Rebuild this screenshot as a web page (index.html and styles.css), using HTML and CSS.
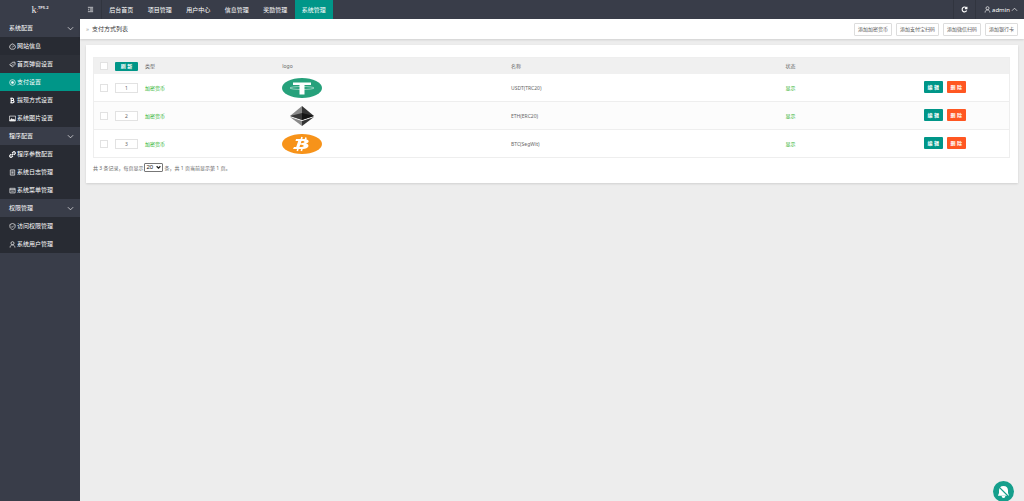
FILE: index.html
```
<!DOCTYPE html>
<html lang="zh-CN">
<head>
  <meta charset="UTF-8">
  <meta name="viewport" content="width=device-width, initial-scale=1.0">
  <title>支付方式列表</title>
  <link rel="stylesheet" href="styles.css">
</head>
<body>
  <svg class="defs" aria-hidden="true">
    <symbol id="i-down" viewBox="0 0 16 16"><path d="M2 5l6 6 6-6"/></symbol>
    <symbol id="i-up" viewBox="0 0 16 16"><path d="M2 11l6-6 6 6"/></symbol>
    <symbol id="i-gauge" viewBox="0 0 16 16"><path d="M4 14h8a6.500 6.500 0 1 0-8 0zM8 10l3-4M4 9h1M8 4v1"/></symbol>
    <symbol id="i-tag" viewBox="0 0 16 16"><path d="M1.500 9l6-6 6-.5.5 5-6 6zM5 9l3 3M7 6l3 3M11 5h1"/></symbol>
    <symbol id="i-radio" viewBox="0 0 16 16"><circle cx="8" cy="8" r="6.500"/><circle cx="8" cy="8" r="2.500" fill="currentColor"/></symbol>
    <symbol id="i-coin" viewBox="0 0 16 16"><path d="M5 3v10h4a2.500 2.500 0 0 0 0-5H5h3a2.500 2.500 0 0 0 0-5H3M3 13h3M7 1v2M7 13v2" stroke-width="2.500"/></symbol>
    <symbol id="i-image" viewBox="0 0 16 16"><path d="M1 2.500h14v11H1z"/><path d="M2 13l4-5 3 3 2-2 3 4z" fill="currentColor"/></symbol>
    <symbol id="i-link" viewBox="0 0 16 16"><path d="M7 5l2.500-2.500a2.800 2.800 0 0 1 4 4L11 9M9 11l-2.500 2.500a2.800 2.800 0 0 1-4-4L5 7M6 10l4-4" stroke-width="2.500"/></symbol>
    <symbol id="i-log" viewBox="0 0 16 16"><path d="M3 2h10v12H3zM5.500 5h5M5.500 8h5M5.500 11h5"/></symbol>
    <symbol id="i-window" viewBox="0 0 16 16"><path d="M2 3h12v10.500H2zM2 6h12M5 9.500h6"/></symbol>
    <symbol id="i-shield" viewBox="0 0 16 16"><path d="M8 1l6 2.500V8c0 3-2.500 5.500-6 7-3.500-1.500-6-4-6-7V3.500zM5 8l2 2 4-4"/></symbol>
    <symbol id="i-user" viewBox="0 0 16 16"><circle cx="8" cy="5" r="3.500"/><path d="M2.500 15c0-3.500 2-6 5.500-6s5.500 2.500 5.500 6"/></symbol>
    <symbol id="i-fold" viewBox="0 0 16 16"><path d="M2 3h12M7 6.500h7M7 9.500h7M2 13h12M4 6v4"/></symbol>
    <symbol id="i-refresh" viewBox="0 0 16 16"><path d="M13 10.500A5.500 5.500 0 1 1 12 4M13.500 1.500V6H9" stroke-width="2.500"/></symbol>
  </svg>

  <aside class="side">
    <a class="logo" href="#"><b>k</b><i>:</i><sup>TP5.2</sup></a>
    <nav class="side-menu">
      <button class="group" type="button">系统配置<svg class="icon"><use href="#i-down"/></svg></button>
      <a href="#"><svg class="icon"><use href="#i-gauge"/></svg>网站信息</a>
      <a class="hover" href="#"><svg class="icon"><use href="#i-tag"/></svg>首页弹窗设置</a>
      <a class="active" href="#"><svg class="icon"><use href="#i-radio"/></svg>支付设置</a>
      <a href="#"><svg class="icon"><use href="#i-coin"/></svg>提现方式设置</a>
      <a href="#"><svg class="icon"><use href="#i-image"/></svg>系统图片设置</a>
      <button class="group" type="button">程序配置<svg class="icon"><use href="#i-down"/></svg></button>
      <a href="#"><svg class="icon"><use href="#i-link"/></svg>程序参数配置</a>
      <a href="#"><svg class="icon"><use href="#i-log"/></svg>系统日志管理</a>
      <a href="#"><svg class="icon"><use href="#i-window"/></svg>系统菜单管理</a>
      <button class="group" type="button">权限管理<svg class="icon"><use href="#i-down"/></svg></button>
      <a href="#"><svg class="icon"><use href="#i-shield"/></svg>访问权限管理</a>
      <a href="#"><svg class="icon"><use href="#i-user"/></svg>系统用户管理</a>
    </nav>
  </aside>

  <div class="main">
    <header class="topbar">
      <button class="fold" type="button" aria-label="菜单"><svg class="icon"><use href="#i-fold"/></svg></button>
      <nav class="top-menu">
        <a href="#">后台首页</a>
        <a href="#">项目管理</a>
        <a href="#">用户中心</a>
        <a href="#">信息管理</a>
        <a href="#">奖励管理</a>
        <a class="active" href="#">系统管理</a>
      </nav>
      <button class="reload" type="button" aria-label="刷新"><svg class="icon"><use href="#i-refresh"/></svg></button>
      <a class="account" href="#"><svg class="icon"><use href="#i-user"/></svg>admin<svg class="icon"><use href="#i-up"/></svg></a>
    </header>

    <div class="page-head">
      <h1><span>»</span>支付方式列表</h1>
      <div class="tools">
        <button type="button">添加加密货币</button>
        <button type="button">添加支付宝扫码</button>
        <button type="button">添加微信扫码</button>
        <button type="button">添加银行卡</button>
      </div>
    </div>

    <main class="card">
      <table class="list">
        <thead>
          <tr>
            <th class="col-check"><input type="checkbox" aria-label="全选"></th>
            <th class="col-sort"><button class="btn sort-btn" type="button">刷 新</button></th>
            <th class="col-type">类型</th>
            <th class="col-logo">logo</th>
            <th class="col-name">名称</th>
            <th class="col-state">状态</th>
            <th></th>
          </tr>
        </thead>
        <tbody>
          <tr>
            <td><input type="checkbox" aria-label="选择 USDT"></td>
            <td><input class="sort" type="text" value="1" aria-label="排序"></td>
            <td class="green">加密货币</td>
            <td>
              <svg class="coin" viewBox="0 0 40 20">
                <ellipse cx="20" cy="10" rx="20" ry="10" fill="#26a17b"/>
                <path d="M11 4.500h18v2.500h-6.500v9.500h-5V7H11z" fill="#fff"/>
                <ellipse cx="20" cy="10" rx="12" ry="1.500" fill="none" stroke="#fff" stroke-width=".5"/>
              </svg>
            </td>
            <td>USDT(TRC20)</td>
            <td class="green">显示</td>
            <td><div class="acts"><button class="btn" type="button">编 辑</button><button class="btn danger" type="button">删 除</button></div></td>
          </tr>
          <tr>
            <td><input type="checkbox" aria-label="选择 ETH"></td>
            <td><input class="sort" type="text" value="2" aria-label="排序"></td>
            <td class="green">加密货币</td>
            <td>
              <svg class="coin" viewBox="0 0 40 20">
                <path d="M20 0L8 10l12 4z" fill="#8a8a8a"/>
                <path d="M20 0l12 10-12 4z" fill="#343434"/>
                <path d="M20 7L8 10l12 4z" fill="#393939"/>
                <path d="M20 7l12 3-12 4z" fill="#141414"/>
                <path d="M8 11l12 4v5z" fill="#8a8a8a"/>
                <path d="M32 11l-12 4v5z" fill="#343434"/>
              </svg>
            </td>
            <td>ETH(ERC20)</td>
            <td class="green">显示</td>
            <td><div class="acts"><button class="btn" type="button">编 辑</button><button class="btn danger" type="button">删 除</button></div></td>
          </tr>
          <tr>
            <td><input type="checkbox" aria-label="选择 BTC"></td>
            <td><input class="sort" type="text" value="3" aria-label="排序"></td>
            <td class="green">加密货币</td>
            <td>
              <svg class="coin" viewBox="0 0 40 20">
                <ellipse cx="20" cy="10" rx="20" ry="10" fill="#f7931a"/>
                <path d="M14 5h8.500c5 .2 5.500 3.500 1.500 4.600 4.500 1.200 2.500 5.400-3 5.400H11l1-2h2.200l2-6h-2.700zM19.500 7l-.7 2.200c4 .2 5.500-2.200.7-2.200zM18.200 10.700l-.7 2.400c5 .2 6-2.400.7-2.400z" fill="#fff" fill-rule="evenodd"/>
                <path d="M20 3l-.7 2.500M24 3.500L23.300 6M16 14.500l-.7 2.500M20 14.500l-.7 2.500" stroke="#fff" stroke-width="1.600"/>
              </svg>
            </td>
            <td>BTC(SegWit)</td>
            <td class="green">显示</td>
            <td><div class="acts"><button class="btn" type="button">编 辑</button><button class="btn danger" type="button">删 除</button></div></td>
          </tr>
        </tbody>
      </table>

      <div class="pager">
        <label for="limit">共 3 条记录，每页显示</label>
        <select id="limit"><option>20</option><option>40</option><option>60</option></select>
        <span>条，共 1 页当前显示第 1 页。</span>
      </div>
    </main>
  </div>

  <button class="notice" type="button" aria-label="通知">
    <svg viewBox="0 0 20 20">
      <path d="M10 2.500c-4 0-6 2.500-6 6V12l-1.500 3.500h15L16 12V8.500c0-3.500-2-6-6-6zM7.500 16h5a2.500 2.500 0 0 1-5 0z" fill="#fff"/>
      <path d="M3 3l14 14" stroke="#159f8c" stroke-width="1.500"/>
    </svg>
  </button>
</body>
</html>
```

FILE: styles.css
```
* {
  box-sizing: border-box;
}
body {
  display: flex;
  min-height: 100vh;
  margin: 0;
  background: #ededed;
  color: #666;
  font-family: "Noto Sans", "Noto Sans CJK SC", sans-serif;
  font-size: 5px;
  line-height: 8px;
}
a {
  color: inherit;
  text-decoration: none;
}
button, input, select {
  margin: 0;
  padding: 0;
  border: none;
  font: inherit;
  color: inherit;
}
button {
  cursor: pointer;
}
.defs {
  position: absolute;
  width: 0;
  height: 0;
}
.icon {
  width: 7px;
  height: 7px;
  flex: none;
  fill: none;
  stroke: currentColor;
  stroke-width: 1.5;
}

/* sidebar */
.side {
  flex: none;
  width: 80px;
  background: #393d49;
  color: #fff;
  font-size: 6px;
}
.logo {
  display: flex;
  align-items: center;
  justify-content: center;
  height: 19px;
  color: #e8e8ea;
  box-shadow: 0 1px 2px rgba(0, 0, 0, .3);
}
.logo b {
  font-family: "Liberation Serif", serif;
  font-size: 10px;
  font-weight: normal;
}
.logo i {
  color: #ff8a65;
  font-style: normal;
}
.logo sup {
  padding-bottom: 4px;
  font-size: 4px;
  font-weight: bold;
}
.side-menu a,
.group {
  display: flex;
  align-items: center;
  gap: 1px;
  width: 100%;
  height: 18px;
  padding: 0 6px 0 9px;
  background: #282b33;
}
.side-menu .group {
  justify-content: space-between;
  background: #393d49;
}
.side-menu .hover {
  background: #2d3038;
}
.side-menu .active,
.top-menu .active {
  background: #009688;
}

/* top bar */
.main {
  flex: 1;
  min-width: 0;
}
.topbar {
  display: flex;
  height: 19px;
  background: #393d49;
  color: #fff;
  font-size: 6px;
}
.fold,
.reload {
  display: flex;
  align-items: center;
  justify-content: center;
  width: 22px;
  background: none;
  border-right: 1px solid #31353f;
}
.reload {
  width: 23px;
  margin-left: auto;
  border-left: 1px solid #31353f;
}
.top-menu {
  display: flex;
  width: 231px;
}
.top-menu a {
  display: flex;
  flex: 1;
  align-items: center;
  justify-content: center;
}
.account {
  display: flex;
  align-items: center;
  gap: 1px;
  padding: 0 6px 0 8px;
}

/* page title */
.page-head {
  display: flex;
  align-items: center;
  justify-content: space-between;
  height: 20px;
  padding: 0 6px;
  background: #fff;
  box-shadow: 0 1px 2px rgba(0, 0, 0, .12);
}
.page-head h1 {
  margin: 0;
  color: #333;
  font-size: 6px;
  font-weight: normal;
}
.page-head h1 span {
  margin-right: 3px;
  color: #999;
}
.tools {
  display: flex;
  gap: 4px;
}
.tools button {
  height: 13px;
  padding: 0 3px;
  background: #fff;
  border: 1px solid #ddd;
  border-radius: 1px;
  color: #555;
}

/* list */
.card {
  margin: 6px;
  padding: 12px 8px 11px 7px;
  background: #fff;
  box-shadow: 0 1px 2px rgba(0, 0, 0, .12);
}
.list {
  width: 100%;
  border: 1px solid #eee;
  border-spacing: 0;
  table-layout: fixed;
}
.list th,
.list td {
  padding: 0 4px;
  text-align: left;
  font-weight: normal;
}
.list th {
  height: 16px;
  background: #f0f0f0;
}
.list td {
  height: 28px;
  border-bottom: 1px solid #eee;
}
.list tr:last-child td {
  height: 27px;
  border-bottom: none;
}
.list tbody tr:nth-child(even) {
  background: #fcfcfc;
}
.list .col-check { width: 17px; }
.list .col-sort { width: 30px; }
.col-type { width: 15%; }
.col-logo { width: 25%; }
.col-name { width: 30%; }
.col-state { width: 15%; }
.list input {
  display: block;
  background: #fff;
  border: 1px solid #e2e2e2;
}
.list input[type="checkbox"] {
  width: 8px;
  height: 8px;
  margin-left: 2px;
  appearance: none;
}
.list input[type="checkbox"]:checked {
  background: #009688;
}
.list .sort {
  width: 23px;
  height: 10px;
  text-align: center;
}
.list .green {
  color: #1eb01e;
}
.coin {
  display: block;
  width: 40px;
  height: 20px;
}
.btn {
  display: block;
  width: 19px;
  height: 12px;
  background: #009688;
  border-radius: 1px;
  color: #fff;
  font-weight: bold;
}
.sort-btn {
  width: 23px;
  height: 9px;
}
.danger {
  background: #ff5722;
}
.acts {
  display: flex;
  gap: 4px;
  padding: 0 0 2px 1px;
}

/* pager */
.pager {
  display: flex;
  align-items: center;
  gap: 1px;
  margin-top: 5px;
}
.pager select {
  width: 19px;
  height: 9px;
  padding-left: 1px;
  appearance: none;
  background: #fff url("data:image/svg+xml,%3Csvg xmlns='http://www.w3.org/2000/svg' viewBox='0 0 8 8'%3E%3Cpath d='M1 2l3 3 3-3' fill='none' stroke='%23222' stroke-width='2'/%3E%3C/svg%3E") no-repeat right 1px center / 5px 5px;
  border: 1px solid #777;
  border-radius: 1px;
  color: #222;
  font-family: "Liberation Sans", sans-serif;
  font-size: 6px;
  line-height: 7px;
}

/* floating button */
.notice {
  position: fixed;
  right: 10px;
  bottom: -1px;
  display: flex;
  align-items: center;
  justify-content: center;
  width: 21px;
  height: 21px;
  background: #159f8c;
  border-radius: 50%;
}
.notice svg {
  width: 15px;
  height: 15px;
}
```
